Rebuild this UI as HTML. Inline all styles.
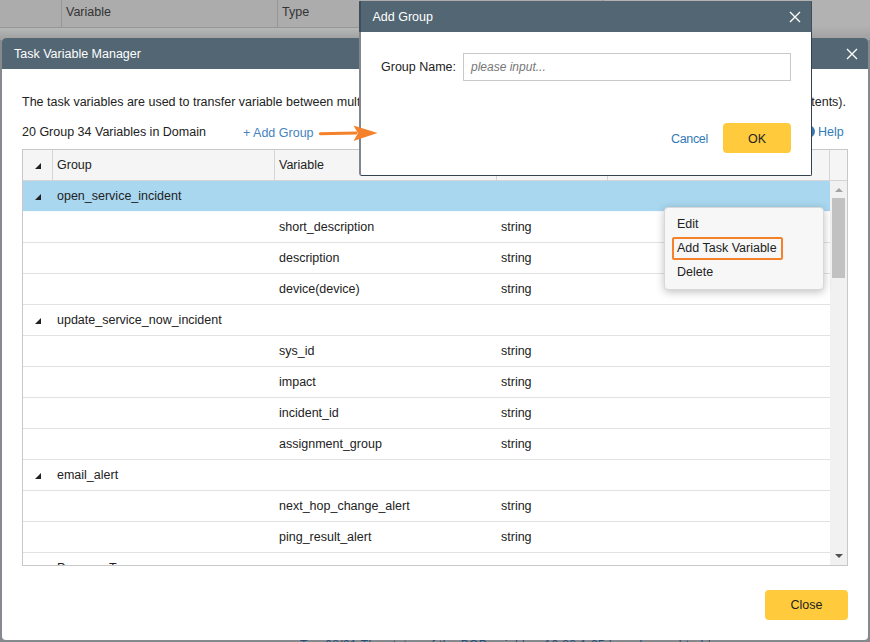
<!DOCTYPE html>
<html><head><meta charset="utf-8">
<style>
*{box-sizing:border-box;margin:0;padding:0}
html,body{width:870px;height:642px;overflow:hidden;background:#9f9f9f;font-family:"Liberation Sans",sans-serif;font-size:12.5px;color:#222}
.abs{position:absolute}
#bgtop{left:0;top:0;width:604px;height:28px;background:#acacac;border-bottom:1px solid #969696}
#bgtop span{position:absolute;top:5.3px;color:#333}
#bgtop i{position:absolute;top:0;width:1px;height:27px;background:#969696}
#dlg{left:2px;top:38px;width:866px;height:602px;background:#fff;border-radius:4px}
#dlghead{left:0;top:0;width:866px;height:31px;background:#536673;border-radius:4px 4px 0 0;color:#fff;font-size:12.5px;line-height:33px;padding-left:12px}
.x{position:absolute}
.x:before,.x:after{content:"";position:absolute;left:50%;top:50%;width:14px;height:1.6px;background:#fff;margin-left:-7px;margin-top:-.8px}
.x:before{transform:rotate(45deg)}.x:after{transform:rotate(-45deg)}
#tbl{left:20px;top:111px;width:826px;height:417px;border:1px solid #c8c8c8;overflow:hidden;background:#fff}
#th{left:0;top:0;width:824px;height:31px;background:#f5f5f5;border-bottom:1px solid #d5d5d5}
#th i{position:absolute;top:0;width:1px;height:30px;background:#d5d5d5}
.row{position:absolute;left:0;width:807px;height:31px;border-bottom:1px solid #e2e2e2;line-height:30px}
.row span{position:absolute;top:0;white-space:nowrap}
.row.sel{background:#a9d7f0;border-bottom-color:#f4fafd}
.tri{position:absolute;left:12px;top:12.5px;width:0;height:0;border-left:6.5px solid transparent;border-bottom:6.5px solid #222}
.g{left:34px}.v{left:256px}.t{left:478px}
#sb{left:807px;top:31px;width:17px;height:384px;background:#f1f1f1}
#sbth{left:2px;top:17px;width:13px;height:80px;background:#c1c1c1}
#menu{left:661.5px;top:168.5px;width:160.5px;height:83.5px;background:#f7f7f7;border:1px solid #d8d8d8;border-radius:4px;box-shadow:0 2px 8px rgba(0,0,0,.25)}
#menu span{position:absolute;left:12.5px}
#hl{left:7.3px;top:29.3px;width:111.5px;height:23.7px;border:2.7px solid #f5822a;border-radius:2px}
#close{left:763px;top:552px;width:83px;height:30px;background:#ffcb3d;border-radius:4px;text-align:center;line-height:30px;font-size:12.5px;color:#222}
#add{left:359px;top:1px;width:453px;height:175px;background:#fff;border-radius:1px 1px 3px 3px;overflow:hidden;z-index:5}
#addb{left:359px;top:32px;width:453px;height:144px;border-radius:0 0 2px 3px;border:1px solid #33424e;border-left:2px solid #80868b;border-top:none;z-index:6}
#addhead{left:0;top:0;width:453px;height:31px;background:#536673;color:#fff;line-height:33px;padding-left:11.5px;border-left:2px solid #3e4d58;border-right:1px solid #3e4d58}
#inp{left:104px;top:52px;width:328px;height:28px;font-size:12px;border:1px solid #c9c9c9;background:#fff;line-height:26px;padding-left:7px;color:#777;font-style:italic}
#ok{left:364px;top:122px;width:68px;height:30px;background:#ffcb3d;border-radius:4px;text-align:center;line-height:32px}
</style></head><body>
<div class="abs" style="left:0;top:0;width:870px;height:40px;background:linear-gradient(#b2b2b2 0,#b2b2b2 26px,#a2a2a2 38px)"></div>
<div class="abs" style="left:0;top:28px;width:604px;height:12px;background:linear-gradient(#b6b8b8,#a2a2a2 10px)"></div>
<div id="bgtop" class="abs"><i style="left:61px"></i><span style="left:66px">Variable</span><i style="left:277px"></i><span style="left:282px">Type</span><i style="left:603px"></i></div>
<div class="abs" style="left:0;top:636px;width:870px;height:6px;background:#868a8d"></div>

<div class="abs" style="left:0;top:40px;width:870px;height:602px;background:#868a8e"></div>
<div class="abs" style="left:300px;top:638.5px;width:410px;height:4px;overflow:hidden;white-space:nowrap;line-height:12px;font-size:12px;color:#24507a;letter-spacing:.4px">Tue 08/21 The status of the BGP neighbor 10.88.1.25 has changed to Idle</div>
<div id="dlg" class="abs">
 <div id="dlghead" class="abs">Task Variable Manager<svg class="abs" style="left:843.8px;top:10px" width="12" height="12" viewBox="0 0 12 12"><path d="M1 1L11 11M11 1L1 11" stroke="#fff" stroke-width="1.35" fill="none"/></svg></div>
 <div class="abs" style="left:20px;top:57px;white-space:nowrap">The task variables are used to transfer variable between multiple tasks, or define</div>
 <div class="abs" style="right:22px;top:57px;white-space:nowrap">the data to be used in other contents (for example, email contents).</div>
 <div class="abs" style="left:20px;top:87px">20 Group 34 Variables in Domain</div>
 <div class="abs" style="left:241px;top:87.5px;color:#4483c0">+ Add Group</div>
 <div class="abs" style="left:816px;top:87px;color:#337ab7">Help</div>
 <div class="abs" style="left:800px;top:87px;width:13px;height:13px;border-radius:50%;background:#337ab7"></div>

 <div id="tbl" class="abs">
  <div id="th" class="abs"><div class="tri"></div><i style="left:29px"></i><span class="abs" style="left:34px;top:8px">Group</span><i style="left:251px"></i><span class="abs" style="left:256px;top:8px">Variable</span><i style="left:473px"></i><i style="left:584px"></i><i style="left:806px"></i></div>
  <div class="row sel" style="top:31px"><div class="tri"></div><span class="g">open_service_incident</span></div>
  <div class="row" style="top:62px"><span class="v">short_description</span><span class="t">string</span></div>
  <div class="row" style="top:93px"><span class="v">description</span><span class="t">string</span></div>
  <div class="row" style="top:124px"><span class="v">device(device)</span><span class="t">string</span></div>
  <div class="row" style="top:155px"><div class="tri"></div><span class="g">update_service_now_incident</span></div>
  <div class="row" style="top:186px"><span class="v">sys_id</span><span class="t">string</span></div>
  <div class="row" style="top:217px"><span class="v">impact</span><span class="t">string</span></div>
  <div class="row" style="top:248px"><span class="v">incident_id</span><span class="t">string</span></div>
  <div class="row" style="top:279px"><span class="v">assignment_group</span><span class="t">string</span></div>
  <div class="row" style="top:310px"><div class="tri"></div><span class="g">email_alert</span></div>
  <div class="row" style="top:341px"><span class="v">next_hop_change_alert</span><span class="t">string</span></div>
  <div class="row" style="top:372px"><span class="v">ping_result_alert</span><span class="t">string</span></div>
  <div class="row" style="top:403px"><span class="g">Process_Type</span></div>
  <div id="sb" class="abs"><div id="sbth" class="abs"></div>
   <div class="abs" style="left:4.5px;top:7px;border-left:4px solid transparent;border-right:4px solid transparent;border-bottom:4px solid #a3a3a3"></div>
   <div class="abs" style="left:4.5px;top:373px;border-left:4px solid transparent;border-right:4px solid transparent;border-top:4px solid #505050"></div>
  </div>
 </div>

 <div id="menu" class="abs"><span style="top:9.7px">Edit</span><span style="top:33.2px">Add Task Variable</span><span style="top:57.5px">Delete</span><div id="hl" class="abs"></div></div>
 <div id="close" class="abs">Close</div>
</div>

<div id="add" class="abs">
 <div id="addhead" class="abs">Add Group<svg class="abs" style="left:428px;top:10px" width="12" height="12" viewBox="0 0 12 12"><path d="M1 1L11 11M11 1L1 11" stroke="#fff" stroke-width="1.35" fill="none"/></svg></div>
 <div class="abs" style="left:22px;top:59px">Group Name:</div>
 <div id="inp" class="abs">please input...</div>
 <div class="abs" style="left:312px;top:130.5px;color:#337ab7;letter-spacing:-.35px">Cancel</div>
 <div id="ok" class="abs">OK</div>
</div>
<div id="addb" class="abs"></div>
<svg class="abs" style="left:310px;top:118px;z-index:9" width="80" height="30" viewBox="310 118 80 30"><path d="M320.3 133.8 L356 133" stroke="#f5822a" stroke-width="3" stroke-linecap="round" fill="none"/><path d="M353.5 125.5 L377.5 133 L353.5 141 L358 133.2 Z" fill="#f5822a"/></svg>
</body></html>
